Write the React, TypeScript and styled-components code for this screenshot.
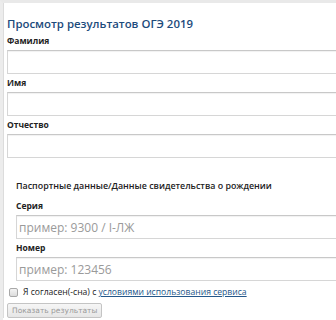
import React from 'react';
import styled, { createGlobalStyle } from 'styled-components';

const GlobalStyle = createGlobalStyle`
  html, body {
    margin: 0;
    padding: 0;
    background: #fff;
    font-family: 'Open Sans', 'Noto Sans', sans-serif;
    overflow: hidden;
  }
`;

const Page = styled.div`
  width: 336px;
  height: 320px;
  box-sizing: border-box;
  border-top: 3px solid #e9e9e9;
  border-left: 3px solid #ececec;
  overflow: hidden;
`;

const Panel = styled.form`
  box-sizing: border-box;
  width: 380px;
  border-left: 1px solid #dcdcdc;
  padding: 11px 0 0 3px;
`;

const Title = styled.h2`
  margin: 0;
  font-size: 11.4px;
  font-weight: 600;
  color: #1c4b7c;
  line-height: 20px;
`;

const Label = styled.label`
  display: block;
  font-size: 8.5px;
  font-weight: 700;
  color: #222;
  line-height: 14px;
  margin: 0 0 2px;
`;

const Input = styled.input`
  display: block;
  box-sizing: border-box;
  width: 100%;
  height: 24px;
  margin: 0 0 2px;
  padding: 0 2px;
  border: 1px solid #d6d6d6;
  border-top-color: #c8c8c8;
  box-shadow: inset 0 1px 1px rgba(0, 0, 0, 0.06);
  font-family: inherit;
  font-size: 12px;
  color: #333;
  &::placeholder {
    color: #9a9a9a;
  }
`;

const Fieldset = styled.div`
  padding: 19px 0 0 9px;
`;

const Legend = styled.div`
  font-size: 8.9px;
  font-weight: 600;
  color: #222;
  line-height: 14px;
  margin: 0 0 6px;
`;

const CheckRow = styled.label`
  display: flex;
  align-items: center;
  gap: 5px;
  margin: 4px 0 4px 2px;
  font-size: 8.6px;
  color: #222;
  line-height: 14px;
`;

const Box = styled.span`
  width: 7px;
  height: 7px;
  border: 1px solid #a8a8a8;
  border-radius: 2px;
  background: linear-gradient(#f4f4f4, #dcdcdc);
`;

const Link = styled.a`
  color: #24578a;
  text-decoration: underline;
`;

const Button = styled.button`
  display: block;
  height: 15px;
  padding: 0 4px;
  font-family: 'DejaVu Sans', sans-serif;
  font-size: 7.5px;
  color: #9a9a9a;
  background: linear-gradient(#f6f6f6, #e6e6e6);
  border: 1px solid #c4c4c4;
  border-radius: 2px;
  line-height: 13px;
`;

export default function App() {
  return (
    <>
      <GlobalStyle />
      <Page>
        <Panel>
          <Title>Просмотр результатов ОГЭ 2019</Title>
          <Label>Фамилия</Label>
          <Input />
          <Label>Имя</Label>
          <Input />
          <Label>Отчество</Label>
          <Input />
          <Fieldset>
            <Legend>Паспортные данные/Данные свидетельства о рождении</Legend>
            <Label>Серия</Label>
            <Input placeholder="пример: 9300 / I-ЛЖ" />
            <Label>Номер</Label>
            <Input placeholder="пример: 123456" />
          </Fieldset>
          <CheckRow>
            <Box />
            <span>
              Я согласен(-сна) с <Link href="#">условиями использования сервиса</Link>
            </span>
          </CheckRow>
          <Button type="button">Показать результаты</Button>
        </Panel>
      </Page>
    </>
  );
}
